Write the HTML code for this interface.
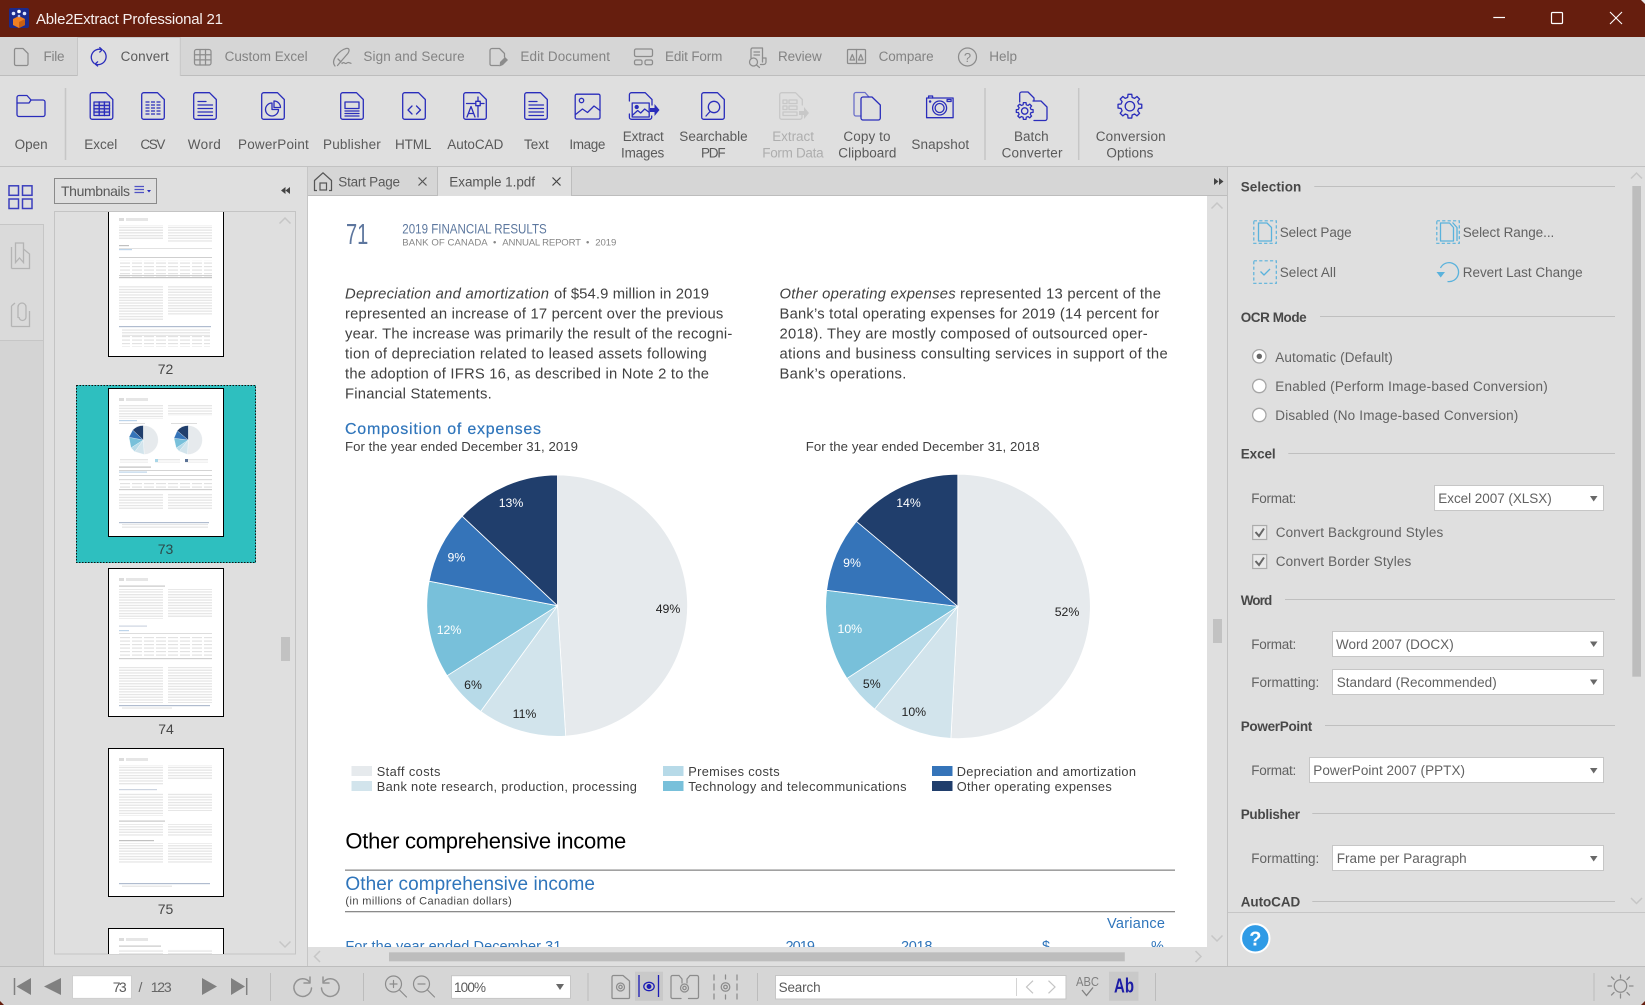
<!DOCTYPE html>
<html lang="en"><head><meta charset="utf-8"><title>Able2Extract Professional 21</title>
<style>
html,body{margin:0;padding:0;background:#dfdfdf;width:1645px;height:1005px;overflow:hidden}
svg{display:block;font-family:"Liberation Sans",Arial,sans-serif}
.m{font-size:13.5px;fill:#838383}
.r{font-size:13.5px;fill:#5a5a5a}
.u{font-size:13.5px;fill:#626262}
.h{font-size:13.5px;fill:#484848;font-weight:bold}
.b{font-size:14.8px;fill:#404040}
.i{font-size:14.8px;fill:#404040;font-style:italic}
.l{font-size:12.8px;fill:#404040}
.p{font-size:12.3px;text-anchor:middle}
.bl{fill:#2f75bb}
.ln{stroke:#bfbfbf;stroke-width:1;fill:none}
.ic{fill:none;stroke:#2a2dbb;stroke-width:1.3;stroke-linejoin:round;stroke-linecap:round}
.gy{fill:none;stroke:#8c8c8c;stroke-width:1.25;stroke-linejoin:round;stroke-linecap:round}
.sel{fill:#fff;stroke:#c6c6c6;stroke-width:1}
.ar{fill:#686868}
.sb{fill:none;stroke:#5ab2dc;stroke-width:1.2;stroke-dasharray:3.2 2.2}
.sp{fill:none;stroke:#5ab2dc;stroke-width:1.3;stroke-linejoin:round}
.rd{fill:#fff;stroke:#a6a6a6;stroke-width:1.3}
.bt{fill:none;stroke:#939393;stroke-width:1.5;stroke-linecap:round;stroke-linejoin:round}
.bf{fill:#808080}
.ch{fill:none;stroke:#c6c6c6;stroke-width:1.5}
</style></head><body>
<svg xmlns="http://www.w3.org/2000/svg" width="1645" height="1005" viewBox="0 0 1645 1005">
<defs>
<path id="dp" d="M3 .7H16.5L23.3 7.5V25.3a2 2 0 0 1-2 2H2.7a2 2 0 0 1-2-2V2.7a2 2 0 0 1 2-2z"/>
<path id="gr" d="M-1.84-7.37L-1.56-9.88 1.56-9.88 1.84-7.37 3.91-6.51 5.88-8.09 8.09-5.88 6.51-3.91 7.37-1.84 9.88-1.56 9.88 1.56 7.37 1.84 6.51 3.91 8.09 5.88 5.88 8.09 3.91 6.51 1.84 7.37 1.56 9.88-1.56 9.88-1.84 7.37-3.91 6.51-5.88 8.09-8.09 5.88-6.51 3.91-7.37 1.84-9.88 1.56-9.88-1.56-7.37-1.84-6.51-3.91-8.09-5.88-5.88-8.09-3.91-6.51z"/>
<pattern id="tl" width="5" height="2.7" patternUnits="userSpaceOnUse"><rect width="5" height="1.3" fill="#e6e6e6"/></pattern>
<pattern id="tt" width="12" height="3.5" patternUnits="userSpaceOnUse"><rect width="10" height="1.2" fill="#e2e2e2"/></pattern>
<clipPath id="doc"><rect x="308" y="196" width="899" height="751"/></clipPath>
<clipPath id="lst"><rect x="55" y="212" width="225" height="742"/></clipPath>
</defs>

<rect width="1645" height="1005" fill="#dfdfdf"/>
<!-- title bar -->
<rect width="1645" height="37" fill="#661e0e"/>
<rect x="9" y="8" width="20" height="20" rx="2" fill="#1c2a8c"/>
<path d="M19 16l6 3v6l-6 3-6-3v-6z" fill="#f07f22"/><path d="M19 22l6-3v6l-6 3z" fill="#c85f12"/>
<circle cx="13.5" cy="13.5" r="1.8" fill="#dfe6ff"/><circle cx="19" cy="11.5" r="1.8" fill="#fff"/><circle cx="24.5" cy="13.5" r="1.8" fill="#dfe6ff"/><circle cx="19" cy="16" r="1.3" fill="#aebcf5"/>
<text x="36" y="24" font-size="15" fill="#f6efee" textLength="187">Able2Extract Professional 21</text>
<path d="M1493.3 17.5H1505" stroke="#fff" stroke-width="1.2"/>
<rect x="1551.5" y="12.5" width="11" height="11" rx="1" fill="none" stroke="#fff" stroke-width="1.2"/>
<path d="M1610 12L1622 24M1622 12L1610 24" stroke="#fff" stroke-width="1.1"/>
<path d="M1641 0h4v4z" fill="#e8e8e8"/>

<!-- menu -->
<rect y="37" width="1645" height="38" fill="#d6d6d6"/>
<rect y="75" width="1645" height="1" fill="#bdbdbd"/>
<path d="M77.5 76V37.5H180.3V76" fill="#dfdfdf" stroke="#c6c6c6"/>
<path class="gy" d="M16.5 48.5H23L28 53.5V64a1.5 1.5 0 0 1-1.5 1.5H16a1.5 1.5 0 0 1-1.5-1.5V50a1.5 1.5 0 0 1 2-1.5z"/>
<text class="m" x="43.5" y="61" textLength="21">File</text>
<g fill="none" stroke="#2a2dbb" stroke-width="1.3" stroke-linecap="round" stroke-linejoin="round"><path d="M102 49.7A8 8 0 0 0 94.2 63.4"/><path d="M95.6 64.2A8 8 0 0 0 103.4 50.6"/><path d="M99.8 47.6l2.4 2.2-2.4 2.2"/><path d="M97.6 66l-2.4-2 2.4-2.2"/></g>
<text class="r" x="120.6" y="61" textLength="48.2">Convert</text>
<g class="gy"><rect x="194.5" y="49.5" width="16.5" height="15.5" rx="2"/><path d="M200 49.5V65M205.5 49.5V65M194.5 54.7H211M194.5 59.9H211"/></g>
<text class="m" x="224.6" y="61" textLength="83">Custom Excel</text>
<g class="gy"><path d="M335 66C330 60 340 50 346 48.5C350.5 47.5 349.5 52 346.5 55L337.5 65.5"/><path d="M338 59l3 3"/><path d="M342 63.5c2-2.5 3 1 4.5-.2s2-1 4.5 0"/></g>
<text class="m" x="363.4" y="61" textLength="101.2">Sign and Secure</text>
<g class="gy"><path d="M492 48.5H499.5L504.5 53.5V57M490 50.5V64a1.5 1.5 0 0 0 1.5 1.5H499M490 50.5A2 2 0 0 1 492 48.5"/></g><path d="M499.5 66.5L500 62L505 57L508 60L503 65z" fill="#8c8c8c"/>
<text class="m" x="520.4" y="61" textLength="89.6">Edit Document</text>
<g class="gy"><rect x="634.5" y="49" width="18" height="7.5" rx="1.5"/><rect x="634.5" y="60" width="7.5" height="4.8" rx="1.5"/><rect x="645" y="60" width="7.5" height="4.8" rx="1.5"/></g>
<text class="m" x="665" y="61" textLength="57.4">Edit Form</text>
<g class="gy"><path d="M751 58V49.5a1.5 1.5 0 0 1 1.5-1.5H762.5V62"/><path d="M754 52H759.5M754 55H759.5"/><circle cx="753.5" cy="62" r="4"/><path d="M756.5 65L759.5 67.5"/><path d="M762.5 58H766V62a2.5 2.5 0 0 1-2.5 2.5H760.5"/></g>
<text class="m" x="778" y="61" textLength="43.7">Review</text>
<g class="gy"><rect x="847.5" y="49.5" width="18" height="14" rx="1"/><path d="M856.5 49.5V63.5"/><path d="M850 60L852.3 54.5 854.5 60zM858.5 60L860.8 54.5 863 60z"/></g>
<text class="m" x="878.6" y="61" textLength="55">Compare</text>
<circle class="gy" cx="967.5" cy="57" r="9"/><text x="967.5" y="62" font-size="13" text-anchor="middle" fill="#8a8a8a">?</text>
<text class="m" x="989.3" y="61" textLength="27.7">Help</text>

<!-- ribbon -->
<rect y="166" width="1645" height="1" fill="#c2c2c2"/>
<path d="M65.5 88V160M985 88V160M1078.7 88V160" stroke="#c6c6c6" stroke-width="1.5"/>
<path class="ic" d="M17 97.5a2 2 0 0 1 2-2H27L31 100H43a2 2 0 0 1 2 2V114.5a2 2 0 0 1-2 2H19a2 2 0 0 1-2-2z"/><path class="ic" d="M31 100L29 103H17"/>
<text class="r" x="14.6" y="149" textLength="33">Open</text>

<g class="ic" transform="translate(89.5 92)"><use href="#dp"/><rect x="4.5" y="10" width="15.5" height="13.5" fill="#2a2dbb" fill-opacity=".12"/><path d="M9.7 10V23.5M14.9 10V23.5M4.5 13.4H20M4.5 16.8H20M4.5 20.1H20" stroke-width="1.4"/></g>
<text class="r" x="84.2" y="149" textLength="33">Excel</text>
<g class="ic" transform="translate(141 92)"><use href="#dp"/><path d="M4.5 10H20M4.5 13H20M4.5 16H20M4.5 19H20M4.5 22H20" stroke-dasharray="4 1.5" stroke-linecap="butt"/></g>
<text class="r" x="140.4" y="149" textLength="25">CSV</text>
<g class="ic" transform="translate(193 92)"><use href="#dp"/><path d="M5 9.5H13M5 13H19.5M5 16.5H19.5M5 20H19.5M5 23.5H19.5"/></g>
<text class="r" x="187.8" y="149" textLength="33">Word</text>
<g class="ic" transform="translate(261 92)"><use href="#dp"/><path d="M11 11A6.5 6.5 0 1 0 17.5 17.5H11z"/><path d="M13 9V15.5H19.5A6.5 6.5 0 0 0 13 9z"/></g>
<text class="r" x="238" y="149" textLength="70.8">PowerPoint</text>
<g class="ic" transform="translate(340 92)"><use href="#dp"/><rect x="5" y="10" width="14" height="6.5"/><path d="M5 19H19M5 21.5H19M5 24H19"/></g>
<text class="r" x="323" y="149" textLength="57.8">Publisher</text>
<g class="ic" transform="translate(402 92)"><use href="#dp"/><path d="M10 14L6 18 10 22M14.5 14L18.5 18 14.5 22"/></g>
<text class="r" x="395" y="149" textLength="36.4">HTML</text>
<g class="ic" transform="translate(463 92)"><use href="#dp"/><path d="M3.5 11.5H21M15 5V25"/><rect x="12.8" y="9.3" width="4.4" height="4.4" fill="#dfdfdf"/><path d="M4 25L8 14.5 12 25M5.5 21.5H10.5"/></g>
<text class="r" x="447.2" y="149" textLength="56.2">AutoCAD</text>
<g class="ic" transform="translate(524 92)"><use href="#dp"/><path d="M5 9.5H13M5 13H19.5M5 16.5H19.5M5 20H19.5M5 23.5H19.5"/></g>
<text class="r" x="524" y="149" textLength="24.8">Text</text>
<g class="ic" transform="translate(574.5 93.5)"><rect x=".7" y=".7" width="24.8" height="24.8" rx="1.5"/><circle cx="7" cy="7" r="2.2"/><path d="M1 21L8 15.5 13 19 19.5 12.5 25.5 17"/></g>
<text class="r" x="569.4" y="149" textLength="36">Image</text>

<g class="ic" transform="translate(628.7 92)"><path d="M.7 9V2.7a2 2 0 0 1 2-2H16.5L23.3 7.5V13M.7 22V25.3a2 2 0 0 0 2 2H21a2 2 0 0 0 2-2V24"/><rect x="3.5" y="11" width="17" height="14"/><circle cx="8" cy="15" r="1.5" fill="#2a2dbb"/><path d="M4 23L9 18.5 12 21 16 17 20 20"/></g>
<path d="M650 108H654.5V104L659.5 110 654.5 116V112H650z" fill="#2a2dbb"/>
<text class="r" x="622.8" y="141" textLength="41">Extract</text><text class="r" x="621" y="157.3" textLength="43.3">Images</text>
<g class="ic" transform="translate(701 92)"><use href="#dp"/><circle cx="13" cy="15" r="5.7"/><path d="M9 19.5L5 24"/></g>
<text class="r" x="679.3" y="141" textLength="68.4">Searchable</text><text class="r" x="701" y="157.3" textLength="24.6">PDF</text>
<g class="ic" style="stroke:#c8c8c8" transform="translate(779 92)"><path d="M.7 2.7a2 2 0 0 1 2-2H16.5L23.3 7.5V13M.7 2.7V25.3a2 2 0 0 0 2 2H21a2 2 0 0 0 2-2V23"/><rect x="4" y="8" width="4" height="3.5"/><rect x="10" y="8" width="8" height="3.5"/><rect x="4" y="14" width="4" height="3.5"/><rect x="10" y="14" width="8" height="3.5"/><rect x="4" y="20" width="14" height="3.5"/></g>
<path d="M799 111H804V107L809 113 804 119V115H799z" fill="#c8c8c8"/>
<text class="r" style="fill:#aeaeae" x="772.2" y="141" textLength="41.8">Extract</text><text class="r" style="fill:#aeaeae" x="762.3" y="157.3" textLength="61.3">Form Data</text>
<path class="ic" style="stroke:#6b6fc9" d="M861 116H856a2 2 0 0 1-2-2V94.5a2 2 0 0 1 2-2H865L869 97"/>
<path class="ic" d="M863 97H872L880.3 105V118a2 2 0 0 1-2 2H863a2 2 0 0 1-2-2V99a2 2 0 0 1 2-2z"/>
<text class="r" x="843.4" y="141" textLength="47.1">Copy to</text><text class="r" x="838.3" y="157.3" textLength="58.1">Clipboard</text>
<g class="ic" transform="translate(925.6 95)"><path d="M1 3H27.5V22.7H1z"/><path d="M3 3V1H7V3"/><circle cx="14" cy="13" r="7"/><circle cx="14" cy="13" r="4.5"/><rect x="21.5" y="4.5" width="4" height="2"/><circle cx="4.5" cy="6.5" r=".6"/></g>
<text class="r" x="911.4" y="149" textLength="57.8">Snapshot</text>
<g class="ic"><path d="M1019.7 102V94a2 2 0 0 1 2-2H1028L1034 98V101"/><path d="M1034 120.5H1045a2 2 0 0 0 2-2V107L1041 101H1033"/><use href="#gr" transform="translate(1024.7 111) scale(.85)" style="stroke-width:1.5"/><circle cx="1024.7" cy="111" r="3.2"/></g>
<text class="r" x="1014" y="141" textLength="34.6">Batch</text><text class="r" x="1001.6" y="157.3" textLength="60.9">Converter</text>
<g class="ic"><use href="#gr" transform="translate(1129.9 106.2) scale(1.2)" style="stroke-width:1.1"/><circle cx="1129.9" cy="106.2" r="4.7"/></g>
<text class="r" x="1095.7" y="141" textLength="70">Conversion</text><text class="r" x="1106.4" y="157.3" textLength="47">Options</text>

<!-- left strip -->
<rect x="0" y="224" width="43" height="116" fill="#dadada"/>
<rect x="0" y="340" width="43" height="626" fill="#d4d4d4"/>
<path d="M0 224.5H43M0 340.5H43M43.5 224V966" stroke="#c6c6c6"/>
<g fill="none" stroke="#3b3fbd" stroke-width="1.5"><rect x="9" y="185.8" width="9.5" height="9.5"/><rect x="22.5" y="185.8" width="9.5" height="9.5"/><rect x="9" y="199" width="9.5" height="9.5"/><rect x="22.5" y="199" width="9.5" height="9.5"/></g>
<g fill="none" stroke="#b4b4b4" stroke-width="1.3"><path d="M11.5 268.5V247M23.5 249L29.5 254V268.5H11.5"/><path d="M15.5 243H23.5V262.5L19.5 258 15.5 262.5z"/><path d="M11.5 326.5V306M11.5 306L15 303M29.5 311V326.5H11.5"/><path d="M18 318V307a4 4 0 0 1 8 0V317a3.5 3.5 0 0 1-7 0"/></g>

<!-- thumbnails panel -->
<path d="M307.5 167V966" stroke="#c6c6c6"/>
<rect x="54.5" y="178.5" width="102" height="25" fill="none" stroke="#8a8a8a"/>
<text x="61" y="196" font-size="14" fill="#585858" textLength="69">Thumbnails</text>
<path d="M134.5 186.5H144M134.5 189.5H144M134.5 192.5H144" stroke="#4e52c4" stroke-width="1.3"/><path d="M147 190H151L149 192.5z" fill="#2a2dbb"/>
<path d="M281 190.5L285.5 187V194zM285.5 190.5L290 187V194z" fill="#444"/>
<rect x="54.5" y="211.5" width="241" height="742.5" fill="#dfdfdf" stroke="#c4c4c4"/>
<g clip-path="url(#lst)">
<rect x="76" y="385" width="180" height="178" fill="#2ebfbf"/>
<rect x="76.5" y="385.5" width="179" height="177" fill="none" stroke="#111" stroke-width="1" stroke-dasharray="1.5 1.5"/>
<g fill="#fff" stroke="#000" stroke-width="1"><rect x="108.5" y="205" width="115" height="151.5"/><rect x="108.5" y="388.5" width="115" height="148"/><rect x="108.5" y="568.5" width="115" height="148"/><rect x="108.5" y="748.5" width="115" height="148"/><rect x="108.5" y="928.5" width="115" height="30"/></g>
<!-- page 72 -->
<rect x="119" y="218" width="5" height="3" fill="#dcdcdc"/><rect x="126" y="218" width="22" height="3" fill="#e6e6e6"/>
<rect x="119" y="225" width="44" height="14" fill="url(#tl)"/><rect x="168" y="225" width="44" height="17" fill="url(#tl)"/><rect x="119" y="229" width="44" height="10" fill="url(#tl)"/>
<rect x="119" y="245" width="10" height="1.2" fill="#c0c0c0"/><rect x="119" y="249" width="13" height="1.2" fill="#bcd4ea"/>
<rect x="119" y="248" width="93" height="1" fill="#e2e2e2"/><rect x="119" y="257" width="93" height="1" fill="#cfcfcf"/><rect x="119" y="260" width="93" height="20" fill="url(#tt)"/><rect x="119" y="275" width="93" height="1" fill="#cfcfcf"/><rect x="119" y="277" width="93" height="1.2" fill="#c4c4c4"/>
<rect x="119" y="285" width="44" height="35" fill="url(#tl)"/><rect x="168" y="285" width="44" height="30" fill="url(#tl)"/>
<rect x="119" y="326" width="92" height="1.2" fill="#b0bccf"/><rect x="122" y="328" width="88" height="8" fill="url(#tl)"/><rect x="122" y="336" width="88" height="11" fill="url(#tt)"/>
<!-- page 73 -->
<rect x="119" y="398" width="5" height="3" fill="#dcdcdc"/><rect x="126" y="398" width="22" height="3" fill="#e6e6e6"/>
<rect x="119" y="405" width="44" height="14" fill="url(#tl)"/><rect x="168" y="405" width="44" height="11" fill="url(#tl)"/>
<rect x="119" y="420" width="18" height="1.2" fill="#bcd4ea"/><rect x="119" y="423" width="26" height="1" fill="#ddd"/><rect x="171" y="423" width="26" height="1" fill="#ddd"/>
<g stroke="#fff" stroke-width=".3">
<path d="M143.3 440V425.5A14.5 14.5 0 0 1 144.2 454.5z" fill="#e6eaed"/><path d="M143.3 440L144.2 454.5 134.8 451.7z" fill="#d2e4ec"/><path d="M143.3 440L134.8 451.7 131 447.8z" fill="#b7dae8"/><path d="M143.3 440L131 447.8 129 437.2z" fill="#78c0da"/><path d="M143.3 440L129 437.2 132.7 430z" fill="#3574b9"/><path d="M143.3 440L132.7 430A14.5 14.5 0 0 1 143.3 425.5z" fill="#203e6c"/>
<path d="M188.3 440V425.5A14.5 14.5 0 1 1 187.5 454.5z" fill="#e6eaed"/><path d="M188.3 440L187.5 454.5 179.2 451.2z" fill="#d2e4ec"/><path d="M188.3 440L179.2 451.2 176.2 448z" fill="#b7dae8"/><path d="M188.3 440L176.2 448 174 438.2z" fill="#78c0da"/><path d="M188.3 440L174 438.2 177.2 430.7z" fill="#3574b9"/><path d="M188.3 440L177.2 430.7A14.5 14.5 0 0 1 188.3 425.5z" fill="#203e6c"/></g>
<rect x="120" y="459" width="28" height="3.5" fill="url(#tl)"/><rect x="155" y="459" width="25" height="3.5" fill="url(#tl)"/><rect x="185" y="459" width="23" height="3.5" fill="url(#tl)"/><rect x="155" y="459" width="3" height="3" fill="#a8d6e8"/><rect x="185" y="459" width="3" height="3" fill="#5a7296"/>
<rect x="119" y="466.5" width="32" height="1.2" fill="#c0c0c0"/><rect x="119" y="470" width="93" height="1" fill="#d4d4d4"/><rect x="119" y="471.5" width="28" height="1.2" fill="#bcd4ea"/><rect x="119" y="475" width="93" height="1" fill="#d4d4d4"/>
<rect x="119" y="479" width="93" height="1.2" fill="#ddd"/><rect x="119" y="482" width="93" height="7" fill="url(#tt)"/><rect x="119" y="489" width="93" height="1.2" fill="#cfcfcf"/>
<rect x="119" y="494" width="44" height="16" fill="url(#tl)"/><rect x="168" y="494" width="44" height="16" fill="url(#tl)"/>
<rect x="119" y="522" width="90" height="1.2" fill="#b0bccf"/><rect x="122" y="524" width="86" height="4" fill="url(#tl)"/>
<!-- page 74 -->
<rect x="119" y="578" width="5" height="3" fill="#dcdcdc"/><rect x="126" y="578" width="22" height="3" fill="#e6e6e6"/>
<rect x="119" y="585.5" width="46" height="1.2" fill="#c8c8c8"/><rect x="119" y="589" width="44" height="30" fill="url(#tl)"/><rect x="168" y="589" width="44" height="28" fill="url(#tl)"/>
<rect x="119" y="625.5" width="28" height="1.2" fill="#ccd4e0"/><rect x="119" y="630" width="10" height="1.2" fill="#bcd4ea"/><rect x="119" y="633" width="93" height="1" fill="#ddd"/><rect x="119" y="636" width="93" height="22" fill="url(#tt)"/><rect x="119" y="658" width="93" height="1.2" fill="#cfcfcf"/>
<rect x="119" y="667" width="44" height="36" fill="url(#tl)"/><rect x="168" y="667" width="44" height="36" fill="url(#tl)"/>
<rect x="119" y="705" width="91" height="1.2" fill="#b0bccf"/><rect x="122" y="707" width="50" height="2.5" fill="url(#tl)"/>
<!-- page 75 -->
<rect x="119" y="758" width="5" height="3" fill="#dcdcdc"/><rect x="126" y="758" width="22" height="3" fill="#e6e6e6"/>
<rect x="119" y="765" width="44" height="20" fill="url(#tl)"/><rect x="168" y="765" width="44" height="15" fill="url(#tl)"/>
<rect x="119" y="789" width="38" height="1.2" fill="#ccd4e0"/><rect x="119" y="793" width="44" height="23" fill="url(#tl)"/><rect x="168" y="793" width="44" height="18" fill="url(#tl)"/>
<rect x="119" y="820.5" width="46" height="1.2" fill="#c8c8c8"/><rect x="119" y="824" width="44" height="13" fill="url(#tl)"/><rect x="168" y="824" width="44" height="13" fill="url(#tl)"/>
<rect x="119" y="840" width="35" height="1.2" fill="#c0c0c0"/><rect x="119" y="843" width="44" height="20" fill="url(#tl)"/><rect x="168" y="843" width="44" height="20" fill="url(#tl)"/>
<rect x="119" y="883" width="91" height="1.2" fill="#b0bccf"/><rect x="122" y="885" width="50" height="2.5" fill="url(#tl)"/>
<!-- page 76 -->
<rect x="119" y="938" width="5" height="3" fill="#dcdcdc"/><rect x="126" y="938" width="22" height="3" fill="#e6e6e6"/><rect x="119" y="945.5" width="42" height="1.2" fill="#c8c8c8"/><rect x="119" y="949" width="44" height="5" fill="url(#tl)"/><rect x="168" y="949" width="44" height="5" fill="url(#tl)"/>
</g>
<g font-size="14" fill="#484848"><text x="165.5" y="374" text-anchor="middle">72</text><text x="165.5" y="554" text-anchor="middle" style="fill:#2d4a4a">73</text><text x="166" y="734" text-anchor="middle">74</text><text x="165.5" y="914" text-anchor="middle">75</text></g>
<path class="ch" d="M279.5 223.5L285 218 290.5 223.5M279.5 941.5L285 947 290.5 941.5"/>
<rect x="281" y="637" width="9" height="24" fill="#c2c2c2"/>

<!-- doc tabs -->
<rect x="308" y="167" width="919" height="29" fill="#d6d6d6"/>
<rect x="437" y="167" width="135" height="29" fill="#dfdfdf"/>
<path d="M437.5 167V196M571.5 167V196M308 195.5H437.5M571.5 195.5H1227" stroke="#bdbdbd"/>
<path class="gy" style="stroke:#555" d="M314.5 190.5V180.5L323 172.8 331.5 180.5V190.5"/><rect x="320" y="183" width="6.5" height="7" fill="none" stroke="#555" stroke-width="1.2"/><path d="M314.5 190.5H317M329 190.5H331.5" stroke="#555" stroke-width="1.2"/>
<text x="338.3" y="186.3" font-size="13.5" fill="#5a5a5a" textLength="61.7">Start Page</text>
<path d="M418.5 177.5L426.5 185.5M426.5 177.5L418.5 185.5" stroke="#555" stroke-width="1.2"/>
<text x="449.3" y="186.3" font-size="13.5" fill="#555" textLength="85.7">Example 1.pdf</text>
<path d="M552.5 177.5L560.5 185.5M560.5 177.5L552.5 185.5" stroke="#444" stroke-width="1.2"/>
<path d="M1214 178L1218.5 181.5 1214 185zM1219 178L1223.5 181.5 1219 185z" fill="#444"/>

<!-- document -->
<rect x="308" y="196" width="899" height="751" fill="#fff"/>
<g clip-path="url(#doc)">
<text x="346" y="244" font-size="28.5" fill="#5d769e" textLength="22.3" lengthAdjust="spacingAndGlyphs">71</text>
<text x="402.3" y="233.3" font-size="13.5" fill="#5d789f" textLength="144.4" lengthAdjust="spacingAndGlyphs">2019 FINANCIAL RESULTS</text>
<g font-size="9.6" fill="#868686"><text x="402.3" y="245.3" textLength="85.4">BANK OF CANADA</text><text x="493" y="245.3">•</text><text x="502.3" y="245.3" textLength="78.7">ANNUAL REPORT</text><text x="586" y="245.3">•</text><text x="595.3" y="245.3" textLength="21">2019</text></g>
<text class="i" x="345" y="298.7" textLength="204">Depreciation and amortization</text><text class="b" x="554" y="298.7" textLength="155">of $54.9 million in 2019</text>
<text class="b" x="345" y="318.7" textLength="378.3">represented an increase of 17 percent over the previous</text>
<text class="b" x="345" y="338.7" textLength="387.3">year. The increase was primarily the result of the recogni-</text>
<text class="b" x="345" y="358.7" textLength="361.7">tion of depreciation related to leased assets following</text>
<text class="b" x="345" y="378.7" textLength="364">the adoption of IFRS 16, as described in Note 2 to the</text>
<text class="b" x="345" y="398.7" textLength="146.7">Financial Statements.</text>
<text class="i" x="779.5" y="298.7" textLength="176.2">Other operating expenses</text><text class="b" x="960" y="298.7" textLength="201">represented 13 percent of the</text>
<text class="b" x="779.5" y="318.7" textLength="379.5">Bank’s total operating expenses for 2019 (14 percent for</text>
<text class="b" x="779.5" y="338.7" textLength="368.2">2018). They are mostly composed of outsourced oper-</text>
<text class="b" x="779.5" y="358.7" textLength="388.2">ations and business consulting services in support of the</text>
<text class="b" x="779.5" y="378.7" textLength="126.9">Bank’s operations.</text>
<text class="bl" x="345" y="434" font-size="16" textLength="196" stroke="#2f75bb" stroke-width=".2">Composition of expenses</text>
<text x="345" y="451" font-size="13.2" fill="#404040" textLength="233">For the year ended December 31, 2019</text>
<text x="805.7" y="451" font-size="13.2" fill="#404040" textLength="233.9">For the year ended December 31, 2018</text>
<!-- pies -->
<g stroke="#fff" stroke-width=".8">
<path d="M557.5 605.7V475A130.7 130.7 0 0 1 565.7 736.1z" fill="#e6eaed"/>
<path d="M557.5 605.7L565.7 736.1A130.7 130.7 0 0 1 480.7 711.4z" fill="#d2e4ec"/>
<path d="M557.5 605.7L480.7 711.4A130.7 130.7 0 0 1 447.1 675.7z" fill="#b7dae8"/>
<path d="M557.5 605.7L447.1 675.7A130.7 130.7 0 0 1 429.1 581.2z" fill="#78c0da"/>
<path d="M557.5 605.7L429.1 581.2A130.7 130.7 0 0 1 462.2 516.2z" fill="#3574b9"/>
<path d="M557.5 605.7L462.2 516.2A130.7 130.7 0 0 1 557.5 475z" fill="#203e6c"/>
<path d="M957.8 606.4V474.2A132.2 132.2 0 1 1 950.9 738.4z" fill="#e6eaed"/>
<path d="M957.8 606.4L950.9 738.4A132.2 132.2 0 0 1 874.6 709.1z" fill="#d2e4ec"/>
<path d="M957.8 606.4L874.6 709.1A132.2 132.2 0 0 1 846.9 678.4z" fill="#b7dae8"/>
<path d="M957.8 606.4L846.9 678.4A132.2 132.2 0 0 1 826.6 590.3z" fill="#78c0da"/>
<path d="M957.8 606.4L826.6 590.3A132.2 132.2 0 0 1 856.5 521.4z" fill="#3574b9"/>
<path d="M957.8 606.4L856.5 521.4A132.2 132.2 0 0 1 957.8 474.2z" fill="#203e6c"/>
</g>
<g class="p" fill="#222"><text x="668" y="613">49%</text><text x="524.5" y="718">11%</text><text x="473" y="689">6%</text><text x="1067" y="616">52%</text><text x="913.8" y="716">10%</text><text x="871.8" y="688">5%</text></g>
<g class="p" fill="#fff"><text x="449" y="634">12%</text><text x="456.4" y="561.5">9%</text><text x="511" y="507">13%</text><text x="849.8" y="633">10%</text><text x="852" y="567">9%</text><text x="908.5" y="507">14%</text></g>
<!-- legend -->
<rect x="351.5" y="766" width="20.5" height="10" fill="#e6eaed"/><rect x="351.5" y="781" width="20.5" height="10" fill="#d2e4ec"/>
<rect x="663" y="766" width="20.5" height="10" fill="#b7dae8"/><rect x="663" y="781" width="20.5" height="10" fill="#78c0da"/>
<rect x="932" y="766" width="20.5" height="10" fill="#3574b9"/><rect x="932" y="781" width="20.5" height="10" fill="#203e6c"/>
<text class="l" x="376.7" y="776" textLength="63.7">Staff costs</text><text class="l" x="376.7" y="791" textLength="260.2">Bank note research, production, processing</text>
<text class="l" x="688.2" y="776" textLength="91.4">Premises costs</text><text class="l" x="688.2" y="791" textLength="218.3">Technology and telecommunications</text>
<text class="l" x="956.7" y="776" textLength="179.3">Depreciation and amortization</text><text class="l" x="956.7" y="791" textLength="155.1">Other operating expenses</text>
<text x="345.4" y="848.3" font-size="22" fill="#000" textLength="280.9">Other comprehensive income</text>
<rect x="345" y="869.5" width="830" height="1.3" fill="#8a8a8a"/>
<text class="bl" x="345.4" y="890" font-size="19" textLength="249.6">Other comprehensive income</text>
<text x="345.4" y="904.7" font-size="11" fill="#444" textLength="166.4">(in millions of Canadian dollars)</text>
<rect x="345" y="911" width="830" height="1.3" fill="#8a8a8a"/>
<text class="bl" x="1107" y="928" font-size="14.5" textLength="58">Variance</text>
<g class="bl" font-size="14.5"><text x="345.4" y="951" textLength="216">For the year ended December 31</text><text x="785.5" y="951" textLength="29.5">2019</text><text x="901" y="951" textLength="31.4">2018</text><text x="1042" y="951">$</text><text x="1151" y="951" textLength="12">%</text></g>
</g>
<!-- doc scrollbars -->
<path class="ch" d="M1211.5 208.5L1217 203 1222.5 208.5M1211.5 935.5L1217 941 1222.5 935.5"/>
<rect x="1213" y="619" width="9" height="24" fill="#c2c2c2"/>
<rect x="389" y="952.3" width="735.8" height="9" fill="#bdbdbd"/>
<path class="ch" d="M320 951L314.5 956.5 320 962M1195.5 951L1201 956.5 1195.5 962"/>

<!-- right panel -->
<path d="M1227.5 167V966" stroke="#c2c2c2"/>
<path class="ch" d="M1631 178.5L1636.5 173 1642 178.5M1631 898L1636.5 903.5 1642 898"/>
<rect x="1632.3" y="186" width="8.7" height="490.7" fill="#bdbdbd"/>
<text class="h" x="1240.7" y="191.7" textLength="60.6">Selection</text><path class="ln" d="M1314.3 186.5H1615"/>
<rect class="sb" x="1253.8" y="220.8" width="22.5" height="22.5"/><path class="sp" d="M1258.5 223H1267L1271.5 227.5V241H1258.5z"/>
<text class="u" x="1279.7" y="236.8" textLength="72">Select Page</text>
<rect class="sb" x="1436.8" y="220.8" width="22.5" height="22.5"/><path class="sp" d="M1440.5 223H1449.5L1453.5 227.5V241H1440.5z"/><path class="sp" d="M1452.5 222.5L1457 227.5V241"/>
<text class="u" x="1462.7" y="236.8" textLength="91.6">Select Range...</text>
<rect class="sb" x="1253.8" y="260.8" width="22.5" height="22.5"/><path class="sp" d="M1260.5 271.5L1264 275 1270 269"/>
<text class="u" x="1279.7" y="276.8" textLength="56.3">Select All</text>
<path class="sp" d="M1440.5 268A9.5 9.5 0 1 1 1447.5 281.5"/><path d="M1436.5 272H1445L1440.7 277.5z" fill="#5ab2dc"/>
<text class="u" x="1462.7" y="276.8" textLength="120">Revert Last Change</text>

<text class="h" x="1240.7" y="322" textLength="66">OCR Mode</text><path class="ln" d="M1320 316.5H1615"/>
<circle class="rd" cx="1259.3" cy="356.3" r="6.7"/><circle cx="1259.3" cy="356.3" r="2.7" fill="#666"/>
<text class="u" x="1275.3" y="362" textLength="117.4">Automatic (Default)</text>
<circle class="rd" cx="1259.3" cy="386" r="6.7"/><text class="u" x="1275.3" y="391" textLength="272.4">Enabled (Perform Image-based Conversion)</text>
<circle class="rd" cx="1259.3" cy="415" r="6.7"/><text class="u" x="1275.3" y="420" textLength="243">Disabled (No Image-based Conversion)</text>

<text class="h" x="1240.7" y="458.7" textLength="35">Excel</text><path class="ln" d="M1288.3 453.5H1615"/>
<text class="u" x="1251.3" y="503" textLength="45">Format:</text>
<rect class="sel" x="1434.5" y="485.5" width="169" height="25"/><text class="u" x="1438.3" y="503" textLength="113.4">Excel 2007 (XLSX)</text><path class="ar" d="M1590 496H1597.5L1593.7 501.5z"/>
<rect x="1252.7" y="525.5" width="14" height="14" fill="#e9e9e9" stroke="#ababab" stroke-width="1.2"/><path d="M1255.5 532L1259 536 1264 528.5" fill="none" stroke="#666" stroke-width="2"/>
<text class="u" x="1275.7" y="537" textLength="167.6">Convert Background Styles</text>
<rect x="1252.7" y="554.5" width="14" height="14" fill="#e9e9e9" stroke="#ababab" stroke-width="1.2"/><path d="M1255.5 561L1259 565 1264 557.5" fill="none" stroke="#666" stroke-width="2"/>
<text class="u" x="1275.7" y="566" textLength="135.6">Convert Border Styles</text>

<text class="h" x="1240.7" y="605" textLength="31.6">Word</text><path class="ln" d="M1285 599.5H1615"/>
<text class="u" x="1251.3" y="649" textLength="45">Format:</text>
<rect class="sel" x="1332.5" y="631.5" width="271" height="25"/><text class="u" x="1336" y="649" textLength="117.7">Word 2007 (DOCX)</text><path class="ar" d="M1590 641.5H1597.5L1593.7 647z"/>
<text class="u" x="1251.3" y="687" textLength="68">Formatting:</text>
<rect class="sel" x="1332.5" y="669.5" width="271" height="25"/><text class="u" x="1336.7" y="687" textLength="160">Standard (Recommended)</text><path class="ar" d="M1590 679.5H1597.5L1593.7 685z"/>

<text class="h" x="1240.7" y="731" textLength="71.6">PowerPoint</text><path class="ln" d="M1325 725.5H1615"/>
<text class="u" x="1251.3" y="775" textLength="45">Format:</text>
<rect class="sel" x="1309.5" y="757.5" width="294" height="25"/><text class="u" x="1313.3" y="775" textLength="151.7">PowerPoint 2007 (PPTX)</text><path class="ar" d="M1590 768H1597.5L1593.7 773.5z"/>

<text class="h" x="1240.7" y="819" textLength="59.3">Publisher</text><path class="ln" d="M1312.3 813.5H1615"/>
<text class="u" x="1251.3" y="863" textLength="68">Formatting:</text>
<rect class="sel" x="1332.5" y="845.5" width="271" height="25"/><text class="u" x="1336.7" y="863" textLength="130">Frame per Paragraph</text><path class="ar" d="M1590 856H1597.5L1593.7 861.5z"/>

<text class="h" x="1240.7" y="906.7" textLength="59.6">AutoCAD</text><path class="ln" d="M1312.3 901.5H1615"/>
<rect x="1228" y="912" width="417" height="54" fill="#dfdfdf"/><path d="M1228 912.5H1645" stroke="#c6c6c6"/>
<circle cx="1255.3" cy="938.3" r="14.2" fill="#2f9be6" stroke="#fff" stroke-width="2"/>
<text x="1255.3" y="945.5" font-size="20" font-weight="bold" fill="#fff" text-anchor="middle">?</text>

<!-- footer -->
<rect y="966" width="1645" height="39" fill="#d6d6d6"/>
<rect y="966" width="1645" height="1" fill="#bdbdbd"/>
<path d="M270.5 973V1001M363.5 973V1001M588 973V1001M757.5 973V1001M1155.5 973V1001M1594 973V1001" stroke="#bcbcbc"/>
<path d="M14.5 978V995" stroke="#808080" stroke-width="1.5"/><path class="bf" d="M31 978L16.5 986.5 31 995z"/>
<path class="bf" d="M61 978L44 986.5 61 995zM202 978L217 986.5 202 995zM231 978L245 986.5 231 995z"/><path d="M246.7 978V995" stroke="#808080" stroke-width="1.5"/>
<rect x="72.5" y="975.7" width="59" height="22.7" fill="#fff" stroke="#cfcfcf"/>
<text x="112.7" y="992" font-size="14" fill="#5a5a5a" textLength="14">73</text>
<text x="138.5" y="992" font-size="14" fill="#666">/</text><text x="150.7" y="992" font-size="14" fill="#666" textLength="21">123</text>
<g class="bt"><path d="M309.5 982A8.8 8.8 0 1 0 311.5 988"/><path d="M310 977V983H304"/><path d="M323.5 982A8.8 8.8 0 1 1 321.5 988"/><path d="M323 977V983H329"/></g>
<g class="gy" style="stroke-width:1.2"><circle cx="393.5" cy="984" r="8"/><path d="M399.5 990L406.5 997M390 984H397M393.5 980.5V987.5"/><circle cx="421.5" cy="984" r="8"/><path d="M427.5 990L434.5 997M418 984H425"/></g>
<rect x="451.5" y="975.7" width="119" height="22.7" fill="#fff" stroke="#c6c6c6"/>
<text x="454" y="992" font-size="13.5" fill="#5a5a5a" textLength="32">100%</text><path class="ar" d="M556 984H564L560 990z"/>
<g class="gy"><path d="M612 997.5V977a1.5 1.5 0 0 1 1.5-1.5H623L629.5 981V997.5a1 1 0 0 1-1 1H613a1 1 0 0 1-1-1z"/><circle cx="620.5" cy="987" r="4"/><circle cx="620.5" cy="987" r="1.7"/></g>
<rect x="635" y="971.7" width="28" height="29" fill="#c9c9c9"/>
<g fill="none" stroke="#1d1db5" stroke-width="1.3"><path d="M639 975V997M658.5 975V997"/><ellipse cx="649" cy="986.5" rx="5.2" ry="4.2"/><circle cx="649" cy="986.5" r="1.8" fill="#1d1db5"/></g>
<g class="gy"><path d="M679 975.5H672.5a1.5 1.5 0 0 0-1.5 1.5V997a1.5 1.5 0 0 0 1.5 1.5H681M679 975.5L682 979V983M690 975.5H697a1.5 1.5 0 0 1 1.5 1.5V997a1.5 1.5 0 0 1-1.5 1.5H688.5M690 975.5L687 979V983"/><circle cx="684.5" cy="988" r="4"/><circle cx="684.5" cy="988" r="1.7"/></g>
<g class="gy"><path d="M714 975V980M714 984V990M714 994V999M737 975V980M737 984V990M737 994V999"/><path d="M725.5 975V979M725.5 995V999"/><circle cx="725.5" cy="987" r="4.3"/><circle cx="725.5" cy="987" r="1.8"/></g>
<rect x="775.5" y="975.5" width="290.5" height="23.5" fill="#fff" stroke="#c6c6c6"/>
<text x="778.6" y="992" font-size="13.5" fill="#5a5a5a" textLength="42">Search</text>
<path d="M1016.5 978V996" stroke="#d4d4d4"/><path d="M1033 980.7L1026.5 987 1033 993.3M1048.5 980.7L1055 987 1048.5 993.3" fill="none" stroke="#c4c4c4" stroke-width="1.2"/>
<text x="1076" y="986" font-size="12.5" fill="#808080" textLength="23" lengthAdjust="spacingAndGlyphs">ABC</text><path d="M1082 990L1086.5 995.5 1093 987.5" fill="none" stroke="#808080" stroke-width="1.3"/>
<rect x="1109" y="971.7" width="29.5" height="29" fill="#c9c9c9"/>
<text x="1114" y="992.7" font-size="20" font-weight="bold" fill="#1d1da5" textLength="20" lengthAdjust="spacingAndGlyphs">Ab</text>
<g class="gy"><circle cx="1620.5" cy="986" r="6.2"/><path d="M1620.5 975V978M1620.5 994V998M1608 986H1611.5M1629.5 986H1633M1611.5 977L1614 979.5M1627 992.5L1629.5 995M1629.5 977L1627 979.5M1614 992.5L1611.5 995"/></g>
<path d="M0 1001v4h4zM1645 1001v4h-4z" fill="#661e0e"/>
</svg>
</body></html>
